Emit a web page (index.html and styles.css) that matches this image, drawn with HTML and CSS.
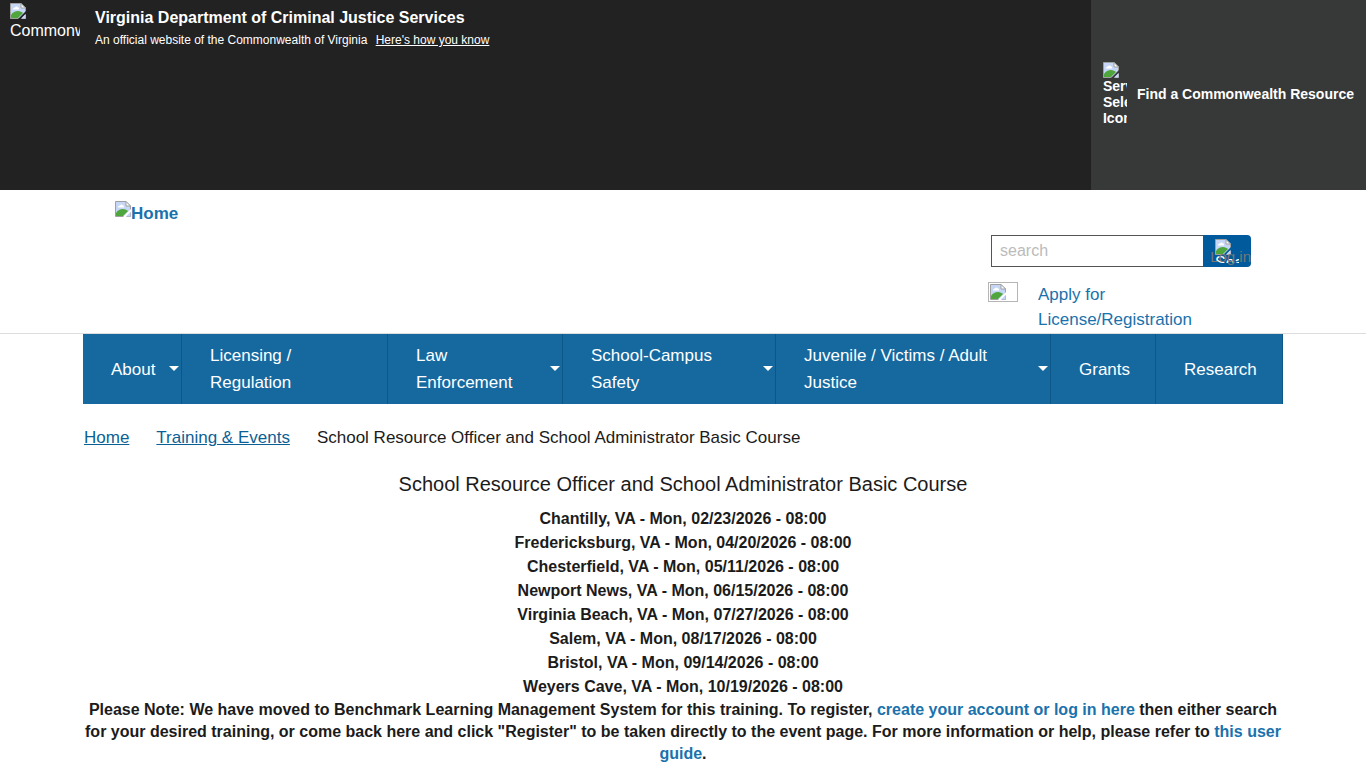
FILE: index.html
```html
<!DOCTYPE html>
<html lang="en">

<head>
    <meta charset="UTF-8">
    <meta name="viewport" content="width=device-width, initial-scale=1">
    <title>School Resource Officer and School Administrator Basic Course</title>
    <link rel="stylesheet" href="styles.css">
</head>

<body>
    <!-- Shared missing picture icon -->
    <svg class="sprite" aria-hidden="true">
        <symbol id="picture" viewBox="0 0 16 16">
            <path d="M0.5 0.5H11L15.5 5V15.5H0.5Z" fill="#c6d6f6" stroke="#a0a0a0"/>
            <path d="M3 6.500C3 5 4 4.500 5 4.500C5.500 3 7.500 3 8 4.500C9.500 4.500 9.500 6.500 8.500 6.500Z" fill="#fff"/>
            <path d="M1 15V12C3 9 5 8 8 8C10 8 12 9 13 10L8 15Z" fill="#4fa63c"/>
            <path d="M11 0.500V5H15.500Z" fill="#fff" stroke="#a0a0a0"/>
            <path class="tear" d="M16 8L8 16H11L16 11Z"/>
            <path d="M11 15.500L15.500 11V15.500Z" fill="#c6d6f6"/>
        </symbol>
    </svg>

    <div class="topbar">
        <a href="#" class="seal">
            <svg class="picture"><use href="#picture"/></svg>
            <span>Commonwealth</span>
        </a>
        <div class="agency">
            <strong>Virginia Department of Criminal Justice Services</strong>
            <p>An official website of the Commonwealth of Virginia <a href="#">Here's how you know</a></p>
        </div>
        <a href="#" class="resource">
            <span class="resource-icon">
                <svg class="picture"><use href="#picture"/></svg>
                Service Selector Icon
            </span>
            <span>Find a Commonwealth Resource</span>
        </a>
    </div>

    <header class="header">
        <div class="container header-inner">
            <a href="#" class="logo"><svg class="picture"><use href="#picture"/></svg>Home</a>
            <div class="tools">
                <form class="search">
                    <input type="text" placeholder="search" aria-label="search">
                    <button type="button">
                        <span class="search-icon">
                            <svg class="picture"><use href="#picture"/></svg>
                            <span>Search</span>
                        </span>
                    </button>
                    <a href="#" class="login">Log in</a>
                </form>
                <div class="apply">
                    <span class="apply-icon"><svg class="picture"><use href="#picture"/></svg></span>
                    <a href="#">Apply for License/Registration</a>
                </div>
            </div>
        </div>
    </header>

    <nav class="container menu">
        <a href="#" class="has-menu">About</a>
        <a href="#">Licensing / Regulation</a>
        <a href="#" class="has-menu">Law Enforcement</a>
        <a href="#" class="has-menu">School-Campus Safety</a>
        <a href="#" class="has-menu">Juvenile / Victims / Adult Justice</a>
        <a href="#">Grants</a>
        <a href="#">Research</a>
    </nav>

    <main class="container content">
        <ul class="breadcrumb">
            <li><a href="#">Home</a></li>
            <li><a href="#">Training &amp; Events</a></li>
            <li>School Resource Officer and School Administrator Basic Course</li>
        </ul>
        <h1>School Resource Officer and School Administrator Basic Course</h1>
        <ul class="dates">
            <li>Chantilly, VA - Mon, 02/23/2026 - 08:00</li>
            <li>Fredericksburg, VA - Mon, 04/20/2026 - 08:00</li>
            <li>Chesterfield, VA - Mon, 05/11/2026 - 08:00</li>
            <li>Newport News, VA - Mon, 06/15/2026 - 08:00</li>
            <li>Virginia Beach, VA - Mon, 07/27/2026 - 08:00</li>
            <li>Salem, VA - Mon, 08/17/2026 - 08:00</li>
            <li>Bristol, VA - Mon, 09/14/2026 - 08:00</li>
            <li>Weyers Cave, VA - Mon, 10/19/2026 - 08:00</li>
        </ul>
        <p class="note">Please Note: We have moved to Benchmark Learning Management System for this training. To register, <a href="#">create your account or log in here</a> then either search for your desired training, or come back here and click "Register" to be taken directly to the event page. For more information or help, please refer to <a href="#">this user guide</a>.</p>
    </main>
</body>

</html>
```
FILE: styles.css
```css
* {
    box-sizing: border-box;
}

body {
    margin: 0;
    background-color: #fff;
    color: #1b1b1b;
    font-family: "Liberation Sans", Arial, sans-serif;
    font-size: 17px;
}

a {
    color: #1a72ac;
    text-decoration: none;
}

ul {
    list-style: none;
    margin: 0;
    padding: 0;
}

.container {
    max-width: 1200px;
    margin: 0 auto;
}

.sprite {
    position: absolute;
    width: 0;
    height: 0;
}

.picture {
    display: block;
    flex: none;
    width: 16px;
    height: 16px;
    color: #fff;
}

.tear {
    fill: currentColor;
}

/* Commonwealth banner */
.topbar {
    display: flex;
    min-height: 190px;
    background-color: #222;
    color: #fff;
}

.seal {
    width: 70px;
    margin: 3px 15px 0 10px;
    overflow: hidden;
    color: #fff;
    font-size: 16px;
    line-height: 24px;
}

.seal .picture {
    color: #222;
}

.agency {
    flex: 1;
    padding-top: 8px;
}

.agency strong {
    display: block;
    font-size: 16px;
    line-height: 20px;
}

.agency p {
    margin: 4px 0 0;
    font-size: 12px;
    line-height: 16px;
}

.agency a {
    margin-left: 5px;
    color: #fff;
    text-decoration: underline;
}

.resource {
    display: flex;
    align-items: center;
    gap: 10px;
    padding: 0 12px 2px;
    background-color: #373938;
    color: #fff;
    font-size: 14px;
    font-weight: bold;
}

.resource-icon {
    width: 24px;
    overflow: hidden;
    line-height: 16px;
}

.resource .picture {
    color: #373938;
}

/* Logo and search */
.header {
    border-bottom: 1px solid #ddd;
}

.header-inner {
    display: flex;
    justify-content: space-between;
    min-height: 143px;
    padding: 11px 32px 0;
}

.logo {
    display: flex;
    align-items: flex-start;
    font-weight: bold;
    line-height: 25px;
}

.tools {
    width: 263px;
    padding-top: 34px;
}

.search {
    position: relative;
    display: flex;
    height: 32px;
    margin-left: 3px;
}

.search input {
    flex: 1;
    min-width: 0;
    padding: 0 8px;
    border: 1px solid #555;
    border-right: none;
    font: inherit;
    font-size: 16px;
}

.search input::placeholder {
    color: #bbb;
}

.search button {
    width: 48px;
    padding: 0;
    border: none;
    border-radius: 0 4px 4px 0;
    background-color: #005a9c;
    color: #fff;
    font: inherit;
    font-size: 16px;
}

.search-icon {
    display: block;
    width: 24px;
    height: 24px;
    margin: 0 auto;
    overflow: hidden;
    line-height: 16px;
    text-align: left;
}

.search .picture {
    color: #005a9c;
}

/* Login link lies over the search button */
.login {
    position: absolute;
    right: 0;
    bottom: 0;
    color: #777;
    font-size: 15px;
    line-height: 20px;
}

.apply {
    display: flex;
    gap: 20px;
    margin-top: 15px;
    line-height: 25px;
}

.apply-icon {
    flex: none;
    width: 30px;
    height: 20px;
    padding: 1px;
    border: 1px solid #b5b5b5;
}

/* Main menu */
.menu {
    display: grid;
    grid-template-columns: 99fr 206fr 175fr 213fr 275fr 105fr 127fr;
    min-height: 70px;
    background-color: #15699f;
}

.menu a {
    position: relative;
    display: flex;
    align-items: center;
    min-width: 0;
    padding: 8px 24px 8px 28px;
    border-right: 1px solid #0d5788;
    color: #fff;
    line-height: 27px;
}

.has-menu::after {
    content: "";
    position: absolute;
    top: 32px;
    right: 2px;
    border: 5px solid transparent;
    border-top-color: #fff;
    border-bottom: none;
}

/* Page content */
.content {
    padding: 20px 1px;
}

.breadcrumb {
    display: flex;
    gap: 27px;
    line-height: 28px;
}

.breadcrumb a {
    color: #0c5f95;
    text-decoration: underline;
}

h1 {
    margin: 18px 0 9px;
    font-size: 20px;
    font-weight: normal;
    line-height: 28px;
    text-align: center;
}

.dates {
    font-size: 16px;
    font-weight: bold;
    line-height: 24px;
    text-align: center;
}

.note {
    margin: 0;
    font-size: 16px;
    font-weight: bold;
    line-height: 22px;
    text-align: center;
}
```
